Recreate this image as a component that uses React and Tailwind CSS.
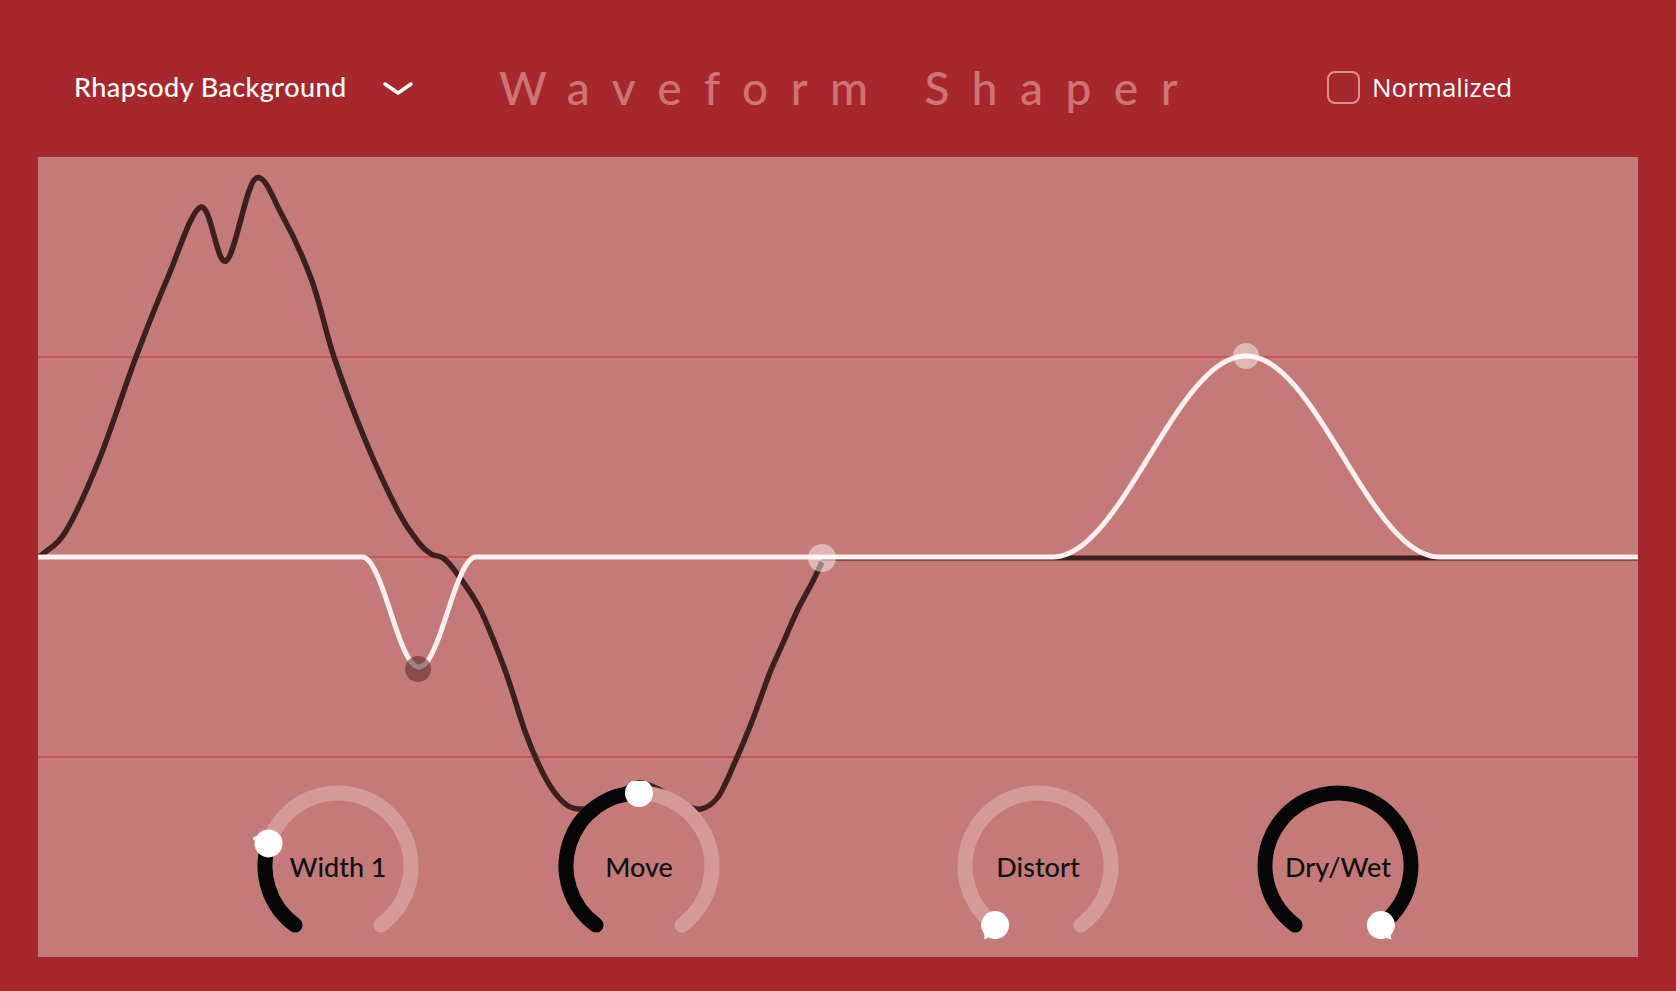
import React from 'react';

// points of the modulation curve, in graph units (1600 x 800)
const modPoints = [
  [0, 400], [6, 396], [28, 374], [61, 303], [98, 200], [130, 120], [163, 50],
  [188, 104], [217, 22], [244, 58], [274, 124], [296, 200], [328, 285], [361, 356],
  [381, 386], [393, 397], [405, 401], [417, 414], [442, 452], [467, 513], [488, 577],
  [508, 622], [525, 645], [540, 652], [560, 648], [581, 636], [601, 626], [622, 633],
  [645, 647], [663, 652], [680, 640], [697, 605], [713, 567], [731, 518], [745, 486],
  [760, 452], [774, 426], [784, 405],
];

const smoothPath = (pts) => {
  let d = `M${pts[0][0]},${pts[0][1]}`;
  for (let i = 0; i < pts.length - 1; i++) {
    const p0 = pts[i - 1] || pts[i];
    const p1 = pts[i];
    const p2 = pts[i + 1];
    const p3 = pts[i + 2] || p2;
    const c1x = p1[0] + (p2[0] - p0[0]) / 6;
    const c1y = p1[1] + (p2[1] - p0[1]) / 6;
    const c2x = p2[0] - (p3[0] - p1[0]) / 6;
    const c2y = p2[1] - (p3[1] - p1[1]) / 6;
    d += ` C${c1x.toFixed(1)},${c1y.toFixed(1)} ${c2x.toFixed(1)},${c2y.toFixed(1)} ${p2[0]},${p2[1]}`;
  }
  return d;
};

// raised-cosine bumps that make up the shaper line
const bump = (x, center, half, height) => {
  const t = (x - center) / half;
  if (Math.abs(t) >= 1) return 0;
  return height * (1 + Math.cos(Math.PI * t)) / 2;
};

const shaperPath = () => {
  const pts = [];
  for (let x = 0; x <= 1600; x += 2) {
    const y = 400 + bump(x, 381, 57, 110) - bump(x, 1208, 194, 201);
    pts.push(`${x},${y.toFixed(1)}`);
  }
  return 'M' + pts.join(' L');
};

function Waveform() {
  return (
    <svg viewBox="0 0 1600 800" className="absolute inset-0 w-full h-full">
      {[200, 400, 600].map((y) => (
        <line key={y} x1="0" x2="1600" y1={y} y2={y} stroke="#c84848" strokeWidth="1.5" />
      ))}
      <path d={smoothPath(modPoints)} fill="none" stroke="#3d1f1f" strokeWidth="5.5" strokeLinejoin="round" />
      <line x1="784" x2="1600" y1="401" y2="401" stroke="#3d1f1f" strokeWidth="5" />
      <path d={shaperPath()} fill="none" stroke="#fbf0ef" strokeWidth="5" strokeLinejoin="round" />
      <circle cx="380" cy="512" r="13" fill="rgba(90,40,40,0.55)" />
      <circle cx="784" cy="401" r="14" fill="rgba(255,255,255,0.45)" />
      <circle cx="1208" cy="199" r="13" fill="rgba(255,255,255,0.45)" />
    </svg>
  );
}

const START = -144;
const SWEEP = 288;
const R = 73;
const C = 85;

const polar = (deg, r = R) => {
  const a = (deg * Math.PI) / 180;
  return [C + r * Math.sin(a), C - r * Math.cos(a)];
};

const arc = (from, to) => {
  const [x1, y1] = polar(from);
  const [x2, y2] = polar(to);
  const large = to - from > 180 ? 1 : 0;
  return `M${x1.toFixed(2)},${y1.toFixed(2)} A${R},${R} 0 ${large} 1 ${x2.toFixed(2)},${y2.toFixed(2)}`;
};

function Knob({ label, value }) {
  const ang = START + SWEEP * value;
  const [hx, hy] = polar(ang);
  const rad = (ang * Math.PI) / 180;
  const ux = Math.sin(rad);
  const uy = -Math.cos(rad);
  const vx = -uy;
  const vy = ux;
  const tip = [hx + ux * 18, hy + uy * 18];
  const b1 = [hx + ux * 9 + vx * 7, hy + uy * 9 + vy * 7];
  const b2 = [hx + ux * 11 - vx * 3, hy + uy * 11 - vy * 3];

  return (
    <div className="relative w-[170px] h-[170px] flex items-center justify-center">
      <svg viewBox="0 0 170 170" className="absolute inset-0 w-full h-full">
        <path d={arc(START, START + SWEEP)} fill="none" stroke="#d49a9a" strokeWidth="15" strokeLinecap="round" />
        {value > 0 && (
          <path d={arc(START, ang)} fill="none" stroke="#050505" strokeWidth="15" strokeLinecap="round" />
        )}
        <polygon points={`${tip.join(',')} ${b1.join(',')} ${b2.join(',')}`} fill="#ffffff" />
        <circle cx={hx} cy={hy} r="14" fill="#ffffff" />
      </svg>
      <span className="relative text-[27px] text-[#111] font-['Lato',sans-serif] font-medium leading-none">{label}</span>
    </div>
  );
}

export default function App() {
  return (
    <div className="w-full min-h-screen bg-[#a6282c] pb-[34px]">
      <header className="h-[157px] pt-[18px] flex items-center text-white">
        <div className="w-[499px] pl-[74px] flex items-center">
          <span className="text-[27px] font-['Lato',sans-serif] font-medium tracking-[0.4px]">Rhapsody Background</span>
          <svg width="32" height="16" viewBox="0 0 32 16" className="ml-[36px] mt-[3px]">
            <path d="M3 3 L16 12 L29 3" fill="none" stroke="#ffffff" strokeWidth="3.5" strokeLinecap="round" strokeLinejoin="round" />
          </svg>
        </div>
        <div className="w-[828px] flex items-center">
          <span className="text-[46px] font-['Lato',sans-serif] font-medium tracking-[22.5px] text-[#cf7373] leading-none">Waveform Shaper</span>
        </div>
        <label className="flex items-center gap-[12px]">
          <span className="w-[33px] h-[33px] rounded-[8px] border-2 border-[#e58e8e]"></span>
          <span className="text-[26px] font-['Open_Sans',sans-serif] font-medium">Normalized</span>
        </label>
      </header>
      <div className="relative mx-auto w-[1600px] h-[800px] bg-[#c57a7a] overflow-hidden">
        <Waveform />
        <div className="absolute left-[215px] bottom-[6px] flex">
          <Knob label="Width 1" value={0.25} />
          <div className="ml-[131px]"><Knob label="Move" value={0.5} /></div>
          <div className="ml-[229px]"><Knob label="Distort" value={0} /></div>
          <div className="ml-[130px]"><Knob label="Dry/Wet" value={1} /></div>
        </div>
      </div>
    </div>
  );
}
